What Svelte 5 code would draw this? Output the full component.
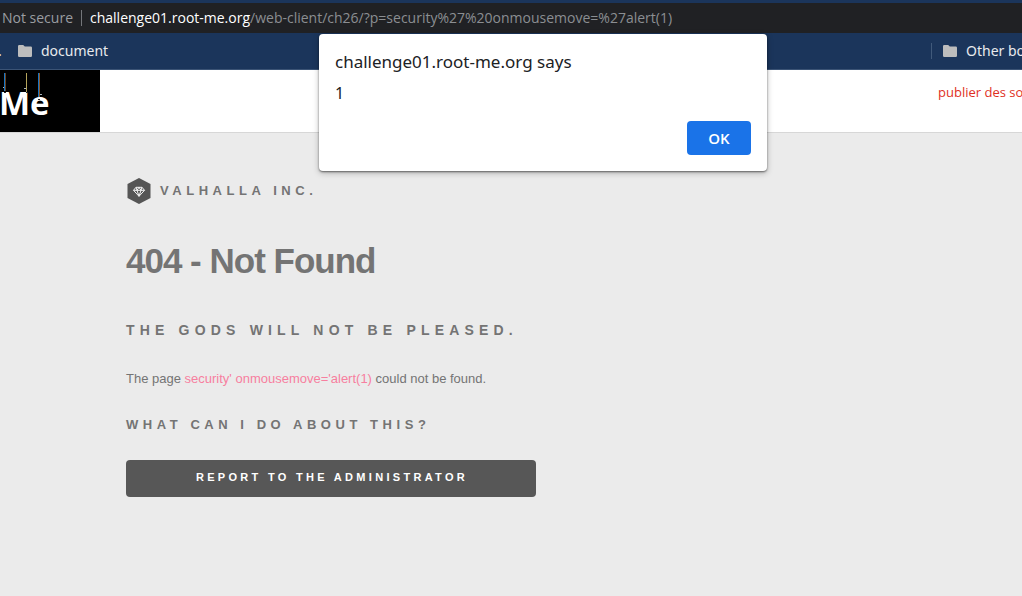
<script>
  const host = 'challenge01.root-me.org';
  const path = '/web-client/ch26/?p=security%27%20onmousemove=%27alert(1)';
  const page = "security' onmousemove='alert(1)";
  let open = $state(true);
</script>

{#snippet folder()}
  <svg class="folder" viewBox="0 0 14 12" aria-hidden="true">
    <path d="M1.2 0H5.2L6.8 1.6H12.8Q14 1.6 14 2.8V10.8Q14 12 12.8 12H1.2Q0 12 0 10.8V1.2Q0 0 1.2 0Z" />
  </svg>
{/snippet}

<div class="browser">
  <div class="address">
    <span class="secure">Not secure</span>
    <span class="url"><b>{host}</b>{path}</span>
  </div>
  <nav class="bookmarks">
    <span class="dot">.</span>
    <a href="#document">{@render folder()}document</a>
    <a class="other" href="#other">{@render folder()}<span>Other bo</span></a>
  </nav>
</div>

<header>
  <a class="logo" href="#home">
    <span>Me</span>
    <svg viewBox="0 0 100 62" aria-hidden="true">
      <path d="M4.5 3V21" stroke="#1674c4" />
      <path d="M5.5 3V21" stroke="#6b4420" />
      <path d="M26.5 3V22" stroke="#b5a45c" />
      <path d="M38.5 3V27" stroke="#1674c4" />
      <path d="M39.5 3V27" stroke="#8b5424" />
      <path d="M3 17.500H4M24 18.500H26M40 24.500H42" stroke="#a8b4bc" />
      <path d="M4 22.500H6M26 22.500H28M38 29.500H40" stroke="#222" />
    </svg>
  </a>
  <a class="publish" href="#publish">publier des so</a>
</header>

<main>
  <div class="brand">
    <svg viewBox="0 0 24 26" aria-hidden="true">
      <path d="M12 0L23.500 6V20L12 26L0.500 20V6Z" fill="#555" />
      <path d="M9 9.300H15L17.500 12.300L12 18.300L6.500 12.300ZM6.500 12.300H17.500M9 9.300L10 12.300L12 18.300L14 12.300L15 9.300M10 12.300L12 9.300L14 12.300" fill="none" stroke="#f4f4f4" stroke-width="1" stroke-linejoin="round" />
    </svg>
    <span>VALHALLA INC.</span>
  </div>
  <h1>404 - Not Found</h1>
  <h2>THE GODS WILL NOT BE PLEASED.</h2>
  <p>The page <a href="#page">{page}</a> could not be found.</p>
  <h3>WHAT CAN I DO ABOUT THIS?</h3>
  <button class="report" type="button">REPORT TO THE ADMINISTRATOR</button>
</main>

{#if open}
  <div class="dialog" role="alertdialog" aria-labelledby="title" aria-describedby="message">
    <div class="title" id="title">{host} says</div>
    <div class="message" id="message">1</div>
    <button type="button" onclick={() => (open = false)}>OK</button>
  </div>
{/if}

<style>
  :global(body) {
    background: #ebebeb;
    overflow-x: hidden;
  }

  a {
    text-decoration: none;
  }

  button {
    border: 0;
    border-radius: 4px;
    cursor: pointer;
  }

  .browser {
    padding-top: 3px;
    background: #1b355b;
    border-bottom: 1px solid #3b5375;
    font-family: 'Noto Sans', sans-serif;
    white-space: nowrap;
  }

  .address {
    display: flex;
    align-items: center;
    height: 30px;
    padding-left: 2px;
    background: #202124;
    color: #9a9da1;
    font: 14px/16px 'Open Sans', sans-serif;
  }

  .secure {
    padding-right: 8px;
    border-right: 1px solid #74767a;
  }

  .url {
    padding-left: 8px;
    color: #8b8e92;
  }

  .url b {
    color: #fff;
    font-weight: 400;
  }

  .bookmarks {
    display: flex;
    align-items: center;
    height: 36px;
    color: #e8eaed;
    font-size: 14px;
    line-height: 16px;
    overflow: hidden;
  }

  .bookmarks a {
    display: flex;
    align-items: center;
    gap: 9px;
    color: #e8eaed;
  }

  .dot {
    flex: none;
    width: 18px;
    text-indent: -2px;
  }

  .folder {
    flex: none;
    width: 14px;
    height: 12px;
    fill: #bdbdbd;
  }

  .bookmarks .other {
    width: 79px;
    margin-left: auto;
    padding-left: 11px;
    border-left: 1px solid #415a7b;
    overflow: hidden;
  }

  header {
    display: flex;
    justify-content: space-between;
    height: 62px;
    background: #fff;
    border-bottom: 1px solid #d7d7d7;
  }

  .logo {
    position: relative;
    width: 100px;
    background: #000;
    color: #fff;
    font: 700 33px/66px 'Open Sans', sans-serif;
  }

  .logo span {
    display: block;
    margin-left: -1px;
  }

  .logo svg {
    position: absolute;
    top: 0;
    left: 0;
    width: 100px;
    height: 62px;
  }

  .publish {
    width: 84px;
    padding-top: 12px;
    color: #e0301e;
    font: 13px/20px 'Open Sans', sans-serif;
    white-space: nowrap;
    overflow: hidden;
  }

  main {
    max-width: 410px;
    padding: 45px 126px;
    color: #747474;
    font-family: 'Liberation Sans', Arial, sans-serif;
    font-size: 13px;
    line-height: 20px;
    white-space: nowrap;
  }

  .brand {
    display: flex;
    align-items: center;
    gap: 8px;
    font-weight: 700;
    letter-spacing: 0.35em;
  }

  .brand svg {
    width: 26px;
    height: 26px;
  }

  h1,
  h2,
  h3,
  p {
    margin: 0;
  }

  h1 {
    margin-top: 36px;
    font-size: 35px;
    line-height: 42px;
    letter-spacing: -1px;
  }

  h2 {
    margin-top: 38px;
    font-size: 14px;
    letter-spacing: 0.37em;
  }

  p {
    margin-top: 29px;
  }

  p a {
    color: #f77f9f;
  }

  h3 {
    margin-top: 26px;
    font-size: 13px;
    letter-spacing: 0.35em;
  }

  .report {
    width: 100%;
    height: 37px;
    margin-top: 25px;
    padding: 0 0 4px 2px;
    background: #575757;
    color: #fff;
    font: 700 11px/20px 'Liberation Sans', Arial, sans-serif;
    letter-spacing: 0.3em;
  }

  .dialog {
    position: absolute;
    top: 34px;
    left: 319px;
    box-sizing: border-box;
    display: flex;
    flex-direction: column;
    width: 448px;
    padding: 16px;
    background: #fff;
    border-radius: 4px;
    box-shadow: 0 1px 2px rgb(0 0 0 / 50%), 0 2px 6px rgb(0 0 0 / 25%);
    color: #202124;
    font-family: 'Noto Sans', sans-serif;
  }

  .title {
    font-size: 17px;
    line-height: 24px;
  }

  .message {
    margin-top: 7px;
    font-size: 16px;
    line-height: 24px;
  }

  .dialog button {
    align-self: flex-end;
    width: 64px;
    height: 34px;
    margin-top: 16px;
    background: #1a73e8;
    color: #fff;
    font: 600 15px/20px 'Open Sans', sans-serif;
  }
</style>
